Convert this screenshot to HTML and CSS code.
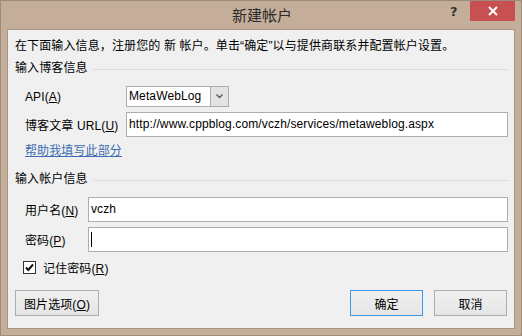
FILE: index.html
```html
<!DOCTYPE html>
<html lang="zh-CN">
<head>
  <meta charset="UTF-8" />
  <title>新建帐户</title>
  <link rel="stylesheet" href="styles.css">
</head>
<body>
  <div class="window">
    <div class="titlebar">
      <div class="title">新建帐户</div>
      <div class="help">?</div>
      <div class="close">
        <svg width="10" height="10" viewBox="0 0 10 10"><path d="M1 1L9 9M9 1L1 9" stroke="#fff" stroke-width="2"/></svg>
      </div>
    </div>

    <div class="client">
      <div class="intro">在下面输入信息，注册您的 新 帐户。单击“确定”以与提供商联系并配置帐户设置。</div>

      <div class="group-title"><span>输入博客信息</span></div>
      <div class="row row-api">
        <label class="label label-wide">API(<u>A</u>)</label>
        <div class="select">
          <span class="select-value">MetaWebLog</span>
          <span class="select-arrow">
            <svg width="7" height="5" viewBox="0 0 7 5"><path d="M0.5 0.5L3.5 3.5L6.5 0.5" fill="none" stroke="#555" stroke-width="1.3"/></svg>
          </span>
        </div>
      </div>
      <div class="row row-input">
        <label class="label label-wide">博客文章 URL(<u>U</u>)</label>
        <div class="textbox">http://www.cppblog.com/vczh/services/metaweblog.aspx</div>
      </div>
      <a class="help-link">帮助我填写此部分</a>

      <div class="group-title group-second"><span>输入帐户信息</span></div>
      <div class="row row-input row-user">
        <label class="label label-narrow">用户名(<u>N</u>)</label>
        <div class="textbox">vczh</div>
      </div>
      <div class="row row-input">
        <label class="label label-narrow">密码(<u>P</u>)</label>
        <div class="textbox"><span class="caret"></span></div>
      </div>
      <div class="check-row">
        <span class="checkbox">
          <svg width="11" height="11" viewBox="0 0 11 11"><path d="M2 5.5L4.3 8L9 2.5" fill="none" stroke="#111" stroke-width="2"/></svg>
        </span>
        <span>记住密码(<u>R</u>)</span>
      </div>

      <div class="buttons">
        <button class="btn btn-options">图片选项(<u>O</u>)</button>
        <div class="spacer"></div>
        <button class="btn btn-ok">确定</button>
        <button class="btn btn-cancel">取消</button>
      </div>
    </div>
  </div>
</body>
</html>
```

FILE: styles.css
```css
body {
  margin: 0;
  padding: 0;
  background: #c4ae9a;
  font-family: "Liberation Sans", "Noto Sans CJK SC", sans-serif;
  font-size: 12px;
  letter-spacing: 0.12px;
  color: #000;
}
.window {
  width: 522px;
  height: 336px;
  box-sizing: border-box;
  border: 1px solid #9d8b7c;
  background: #c4ae9a;
  display: flex;
  flex-direction: column;
}
.titlebar {
  height: 28px;
  position: relative;
  flex-shrink: 0;
}
.title {
  text-align: center;
  font-family: "Noto Sans CJK SC", sans-serif;
  font-size: 15px;
  line-height: 28px;
  letter-spacing: 0;
  color: #2b2b2b;
  padding-left: 2px;
}
.help {
  position: absolute;
  left: 449px;
  top: 3px;
  font-family: "DejaVu Sans", sans-serif;
  font-weight: bold;
  font-size: 13px;
  color: #333;
}
.close {
  position: absolute;
  left: 469px;
  top: 0;
  width: 45px;
  height: 20px;
  background: #c75050;
  display: flex;
  align-items: center;
  justify-content: center;
}
.client {
  margin: 0 6px 6px 6px;
  flex: 1;
  border: 1px solid #a59687;
  background: #f0f0f0;
  padding: 8px 6px 0 7px;
  display: flex;
  flex-direction: column;
}
.intro {
  height: 17px;
  line-height: 17px;
  white-space: nowrap;
}
.group-title {
  margin-top: 5px;
  height: 17px;
  line-height: 17px;
  display: flex;
  align-items: center;
}
.group-title::after {
  content: "";
  flex: 1;
  height: 1px;
  background: #dcdcdc;
  margin-left: 5px;
  margin-top: 1px;
}
.group-second {
  margin-top: 11px;
}
.row {
  display: flex;
  align-items: center;
  padding-left: 10px;
}
.row-api {
  margin-top: 9px;
  height: 21px;
}
.row-input {
  margin-top: 5px;
  height: 25px;
}
.row-user {
  margin-top: 9px;
}
.label {
  flex-shrink: 0;
}
.label-wide {
  width: 101px;
}
.label-narrow {
  width: 63px;
}
.select {
  width: 103px;
  height: 21px;
  box-sizing: border-box;
  border: 1px solid #acacac;
  background: #fff;
  display: flex;
}
.select-value {
  flex: 1;
  padding-left: 2px;
  line-height: 19px;
}
.select-arrow {
  width: 18px;
  box-sizing: border-box;
  border-left: 1px solid #acacac;
  background: #e3e3e3;
  display: flex;
  align-items: center;
  justify-content: center;
}
.textbox {
  flex: 1;
  height: 25px;
  box-sizing: border-box;
  border: 1px solid #abadb3;
  background: #fff;
  padding-left: 2px;
  line-height: 23px;
  display: flex;
  align-items: center;
  white-space: nowrap;
}
.caret {
  width: 1px;
  height: 15px;
  background: #000;
}
.help-link {
  margin-top: 6px;
  margin-left: 10px;
  height: 17px;
  line-height: 17px;
  color: #3c6db4;
  text-decoration: underline;
}
.check-row {
  margin-top: 8px;
  margin-left: 8px;
  height: 14px;
  display: flex;
  align-items: center;
  gap: 7px;
}
.checkbox {
  width: 13px;
  height: 13px;
  box-sizing: border-box;
  border: 1px solid #333;
  background: #fff;
  display: flex;
  align-items: center;
  justify-content: center;
}
.buttons {
  margin-top: 16px;
  display: flex;
  gap: 11px;
}
.spacer {
  flex: 1;
}
.btn {
  height: 26px;
  box-sizing: border-box;
  border: 1px solid #adadad;
  background: linear-gradient(#f0f0f0, #e5e5e5);
  font-family: "Liberation Sans", "Noto Sans CJK SC", sans-serif;
  font-size: 12px;
  letter-spacing: 0.12px;
  color: #000;
  padding: 0;
}
.btn-options {
  width: 84px;
}
.btn-ok {
  width: 73px;
  border-color: #3c9ae8;
}
.btn-cancel {
  width: 73px;
  margin-right: 1px;
}
```
